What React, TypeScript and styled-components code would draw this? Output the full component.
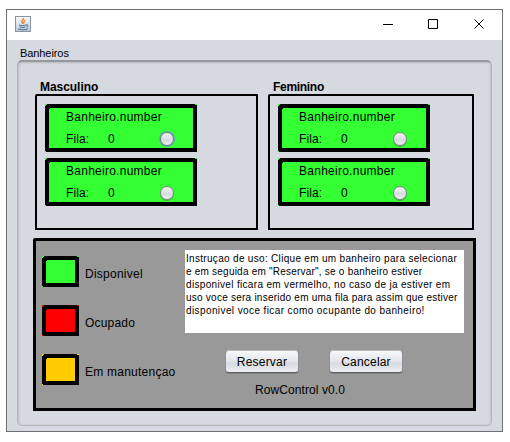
import React from "react";
import styled, { createGlobalStyle } from "styled-components";

const GlobalStyle = createGlobalStyle`
  * { box-sizing: border-box; }
  body {
    margin: 0;
    background: #fff;
    color: #000;
    font: 12px/14px "Liberation Sans", Arial, sans-serif;
  }
`;

const Window = styled.main`
  width: 497px;
  height: 423px;
  margin: 9px 0 0 6px;
  border: 1px solid #707070;
  background: #d6d9df;
  display: flex;
  flex-direction: column;
`;

const TitleBar = styled.header`
  height: 30px;
  flex: none;
  background: #fff;
  display: flex;
  justify-content: space-between;
  padding: 0 17px 0 8px;
`;

const JavaIcon = styled.svg`
  width: 16px;
  height: 16px;
  margin-top: 6px;
`;

const Controls = styled.div`
  display: grid;
  grid-template-columns: 45px 46px 11px;
  padding-top: 9px;
`;

const Glyph = styled.svg`
  width: 11px;
  height: 11px;
`;

const Body = styled.div`
  padding: 6px 10px 0;
`;

const Text = styled.span<{ $spacing?: number }>`
  display: block;
  white-space: pre;
  letter-spacing: ${(p) => p.$spacing ?? 0}px;
`;

const GroupTitle = styled(Text)`
  font-size: 11px;
  padding-left: 3px;
`;

const Group = styled.section`
  width: 475px;
  height: 366px;
  border: 1px solid #b2b5ba;
  border-top: 2px solid #95989d;
  border-radius: 5px;
  box-shadow: inset 1px 1px 2px #babdc3, inset -1px 0 2px #c3c6cc;
  padding: 18px 15px 0;
`;

const Sections = styled.div`
  display: flex;
  gap: 10px;
  padding-left: 2px;
`;

const SectionTitle = styled(Text)`
  font-weight: bold;
  padding-left: 5px;
`;

const Frame = styled.div<{ $width: number }>`
  width: ${(p) => p.$width}px;
  height: 136px;
  border: 2px solid #000;
  border-radius: 2px 1px 0 0;
  padding: 8px;
  display: flex;
  flex-direction: column;
  gap: 6px;
`;

const CornerBox = styled.div<{ $fill: string }>`
  border: 4px solid #000;
  background: ${(p) => p.$fill};
  position: relative;
  &::before {
    content: "";
    position: absolute;
    inset: -4px;
    background:
      linear-gradient(${(p) => p.$fill}, ${(p) => p.$fill}) 0 0 / 2px 1px no-repeat,
      linear-gradient(${(p) => p.$fill}, ${(p) => p.$fill}) 0 1px / 1px 1px no-repeat,
      linear-gradient(${(p) => p.$fill}, ${(p) => p.$fill}) 100% 0 / 2px 1px no-repeat,
      linear-gradient(${(p) => p.$fill}, ${(p) => p.$fill}) 0 100% / 1px 1px no-repeat,
      linear-gradient(#000, #000) 4px 4px / 1px 1px no-repeat;
  }
`;

const Stall = styled(CornerBox)`
  width: 152px;
  height: 48px;
  padding: 2px 0 0 17px;
`;

const StallRow = styled.div`
  display: grid;
  grid-template-columns: 42px 51px 16px;
  align-items: center;
  padding-top: 8px;
`;

const Radio = styled.i<{ $focused?: boolean }>`
  width: 14px;
  height: 14px;
  border-radius: 50%;
  border: 1px solid ${(p) => (p.$focused ? "#67809c" : "#7d8586")};
  background: linear-gradient(#f5f5f7, #d9dbe1 60%, #ededf2);
  box-shadow: ${(p) => (p.$focused ? "0 0 0 1px #739bbd" : "0 1px 0 #4baa4b")};
  margin: -1px 0 -1px 1px;
`;

const Panel = styled.div`
  width: 443px;
  height: 173px;
  margin-top: 8px;
  border: 3px solid #000;
  border-radius: 2px 0 0 0;
  background: #999;
  display: grid;
  grid-template-columns: 149px 279px;
`;

const Legend = styled.div`
  padding: 15px 0 0 6px;
  display: flex;
  flex-direction: column;
  gap: 18px;
`;

const LegendRow = styled.div`
  display: flex;
  align-items: center;
  gap: 6px;
  height: 31px;
`;

const Swatch = styled(CornerBox)`
  width: 37px;
  height: 31px;
  flex: none;
`;

const LegendText = styled(Text)`
  padding-top: 5px;
`;

const Instructions = styled.div`
  height: 83px;
  margin-top: 9px;
  padding: 2px 1px;
  background: #fff;
  font-size: 10px;
  line-height: 13px;
`;

const Buttons = styled.div`
  display: flex;
  gap: 30px;
  padding: 17px 0 0 40px;
`;

const Button = styled.button`
  width: 74px;
  height: 23px;
  padding: 1px 0 0;
  border: 1px solid #8d8f94;
  border-bottom-color: #5c5e62;
  border-top-color: #b9babd;
  border-radius: 4px;
  background: linear-gradient(#f7f8fa, #e5e7eb 45%, #d7dae0 60%, #eceef2);
  box-shadow: 0 1px 0 #838383;
  font: inherit;
  letter-spacing: 0.2px;
  color: inherit;
  display: flex;
  align-items: center;
  justify-content: center;
`;

const Version = styled(Text)`
  padding: 10px 0 0 70px;
`;

const GREEN = "#33ff33";

const legend = [
  { label: "Disponivel", fill: GREEN, spacing: 0.25 },
  { label: "Ocupado", fill: "#ff0000", spacing: 0.2 },
  { label: "Em manutençao", fill: "#ffcc00", spacing: 0.24 },
];

const instructions = [
  { text: "Instruçao de uso: Clique em um banheiro para selecionar", spacing: 0.31 },
  { text: 'e em seguida em "Reservar", se o banheiro estiver', spacing: 0.22 },
  { text: "disponivel ficara em vermelho, no caso de ja estiver em", spacing: 0.33 },
  { text: "uso voce sera inserido em uma fila para assim que estiver", spacing: 0.24 },
  { text: "disponivel voce ficar como ocupante do banheiro!", spacing: 0.4 },
];

function StallCard({ focused }: { focused?: boolean }) {
  return (
    <Stall $fill={GREEN}>
      <Text $spacing={0.26}>Banheiro.number</Text>
      <StallRow>
        <Text $spacing={0.1}>Fila:</Text>
        <Text>0</Text>
        <Radio $focused={focused} />
      </StallRow>
    </Stall>
  );
}

export default function App() {
  return (
    <>
      <GlobalStyle />
      <Window>
        <TitleBar>
          <JavaIcon viewBox="0 0 16 16" fill="none">
            <defs>
              <linearGradient id="tile" x1="0" y1="0" x2="0" y2="1">
                <stop stopColor="#f8fafb" />
                <stop offset="1" stopColor="#b9cad7" />
              </linearGradient>
            </defs>
            <rect x=".5" y=".5" width="15" height="15" fill="url(#tile)" stroke="#8796a1" />
            <path d="M8.500 2c.8 1.600-2.300 2.400-1.700 4 .3.8 1 1.200 1 2M10.200 4.300C8.500 5.200 8.300 6 9 7.500" stroke="#e8832f" strokeWidth="1.300" />
            <path d="M4 9c1.500.8 5 .8 7 0M4.700 11c1.500.6 4.100.6 5.500 0M3 13c2.500 1 7 1 10 0M11 9c2.600-.8 2.800 1.700.5 2.300" stroke="#426b8c" />
          </JavaIcon>
          <Controls>
            <Glyph viewBox="0 0 11 11"><path d="M0 5.500h10" stroke="#000" /></Glyph>
            <Glyph viewBox="0 0 11 11"><path d="M.5.500h9v9h-9z" fill="none" stroke="#000" /></Glyph>
            <Glyph viewBox="0 0 11 11"><path d="M.5.500l9 9M9.500.500l-9 9" stroke="#000" /></Glyph>
          </Controls>
        </TitleBar>
        <Body>
          <GroupTitle $spacing={-0.08}>Banheiros</GroupTitle>
          <Group>
            <Sections>
              <div>
                <SectionTitle $spacing={-0.05}>Masculino</SectionTitle>
                <Frame $width={223}>
                  <StallCard focused />
                  <StallCard />
                </Frame>
              </div>
              <div>
                <SectionTitle $spacing={-0.3}>Feminino</SectionTitle>
                <Frame $width={206}>
                  <StallCard />
                  <StallCard />
                </Frame>
              </div>
            </Sections>
            <Panel>
              <Legend>
                {legend.map((item) => (
                  <LegendRow key={item.label}>
                    <Swatch $fill={item.fill} />
                    <LegendText $spacing={item.spacing}>{item.label}</LegendText>
                  </LegendRow>
                ))}
              </Legend>
              <div>
                <Instructions>
                  {instructions.map((line) => (
                    <Text key={line.text} $spacing={line.spacing}>{line.text}</Text>
                  ))}
                </Instructions>
                <Buttons>
                  <Button>Reservar</Button>
                  <Button>Cancelar</Button>
                </Buttons>
                <Version $spacing={0.08}>RowControl v0.0</Version>
              </div>
            </Panel>
          </Group>
        </Body>
      </Window>
    </>
  );
}
